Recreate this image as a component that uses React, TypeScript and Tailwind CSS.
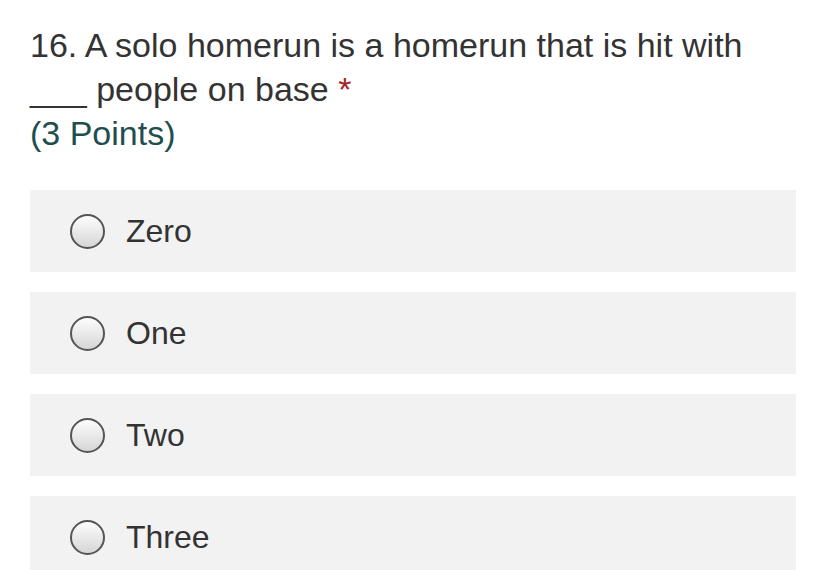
import React from "react";

const options = ["Zero", "One", "Two", "Three"];

function Radio() {
  return (
    <span className="block w-[35px] h-[35px] rounded-full border-2 border-[#555] bg-gradient-to-b from-[#fdfdfd] to-[#d6d6d6] shrink-0" />
  );
}

export default function App() {
  return (
    <div className="w-[826px] h-[570px] overflow-hidden bg-white pl-[30px] pr-[30px] pt-[23px] font-['Liberation_Sans',Arial,sans-serif]">
      <div className="text-[34px] leading-[44px] text-[#333]">
        16. A solo homerun is a homerun that is hit with
        <br />
        ___ people on base <span className="text-[#a4262c]">*</span>
      </div>
      <div className="text-[34px] leading-[44px] text-[#1e4e4e]">(3 Points)</div>
      <div className="mt-[35px] flex flex-col gap-[20px]">
        {options.map((o) => (
          <div key={o} className="h-[82px] bg-[#f2f2f2] flex items-center pl-[40px] gap-[21px]">
            <Radio />
            <span className="text-[32px] text-[#333] leading-none">{o}</span>
          </div>
        ))}
      </div>
    </div>
  );
}
